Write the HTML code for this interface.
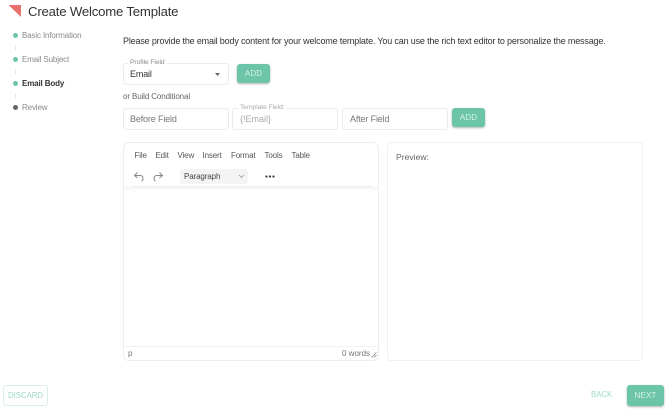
<!DOCTYPE html>
<html><head><meta charset="utf-8">
<style>
html,body{margin:0;padding:0;background:#fff;}
body{width:670px;height:409px;overflow:hidden;position:relative;font-family:"Liberation Sans",sans-serif;color:#333;}
#w{position:absolute;left:0;top:0;width:670px;height:409px;filter:blur(.3px);background:#fff;}
.a{position:absolute;white-space:nowrap;}
.box{position:absolute;box-sizing:border-box;border:1px solid #ebebeb;border-radius:3px;background:#fff;}
.dot{position:absolute;width:5px;height:5px;border-radius:50%;background:#6cc5a8;left:12.5px;}
.vl{position:absolute;left:14.5px;width:1px;height:5px;background:#e6e6e6;}
.step{position:absolute;left:22px;font-size:8px;letter-spacing:-.14px;color:#8a8a8a;white-space:nowrap;line-height:10px;}
.btn{position:absolute;box-sizing:border-box;background:#6cc5a8;color:#d6f0e6;border-radius:3px;text-align:center;font-size:8px;letter-spacing:.15px;box-shadow:0 1px 2px rgba(0,0,0,.3);}
.lg{position:absolute;font-size:6.8px;letter-spacing:-.1px;color:#8a8a8a;background:#fff;padding:0 2px;line-height:8px;white-space:nowrap;}
.val{position:absolute;font-size:9px;letter-spacing:-.15px;color:#777;white-space:nowrap;line-height:11px;}
.m{position:absolute;top:151px;font-size:8px;letter-spacing:-.15px;color:#555;line-height:10px;white-space:nowrap;}
</style></head>
<body><div id="w">
<svg class="a" style="left:8px;top:5px" width="14" height="13"><polygon points="0.5,0 13,0 13,12" fill="#e8706e"/></svg>
<div class="a" style="left:28px;top:2.5px;font-size:13.2px;letter-spacing:-.2px;line-height:17px;color:#333;">Create Welcome Template</div>

<div class="dot" style="top:33px"></div><div class="step" style="top:30.5px">Basic Information</div>
<div class="vl" style="top:45px"></div>
<div class="dot" style="top:57px"></div><div class="step" style="top:54.5px">Email Subject</div>
<div class="vl" style="top:69px"></div>
<div class="dot" style="top:81px"></div><div class="step" style="top:78.5px;color:#333;font-weight:bold">Email Body</div>
<div class="vl" style="top:94px"></div>
<div class="dot" style="top:105px;background:#666"></div><div class="step" style="top:103px">Review</div>

<div class="a" style="left:123px;top:35px;font-size:9px;letter-spacing:-.17px;line-height:12px;color:#333;">Please provide the email body content for your welcome template. You can use the rich text editor to personalize the message.</div>

<div class="box" style="left:123px;top:63px;width:106px;height:22px"></div>
<div class="lg" style="left:128px;top:59px">Profile Field</div>
<div class="val" style="left:130px;top:68.5px;color:#333">Email</div>
<svg class="a" style="left:214px;top:73px" width="7" height="4"><polygon points="1,0 6,0 3.5,3" fill="#666"/></svg>
<div class="btn" style="left:237px;top:64px;width:33px;height:19px;line-height:19px">ADD</div>

<div class="a" style="left:123px;top:91.5px;font-size:8px;letter-spacing:-.12px;line-height:10px;color:#666;">or Build Conditional</div>

<div class="box" style="left:123px;top:108px;width:106px;height:22px"></div>
<div class="val" style="left:130px;top:113.5px">Before Field</div>
<div class="box" style="left:232px;top:108px;width:106px;height:22px"></div>
<div class="lg" style="left:238px;top:104px;color:#aaa">Template Field:</div>
<div class="val" style="left:240px;top:113.5px;color:#aaa;letter-spacing:0">{!Email}</div>
<div class="box" style="left:342px;top:108px;width:106px;height:22px"></div>
<div class="val" style="left:350px;top:113.5px">After Field</div>
<div class="btn" style="left:452px;top:108px;width:33px;height:19px;line-height:19px">ADD</div>

<div class="box" style="left:123px;top:142px;width:256px;height:219px;border-color:#eee;border-radius:6px"></div>
<div class="m" style="left:134.5px">File</div>
<div class="m" style="left:155.5px">Edit</div>
<div class="m" style="left:177.5px">View</div>
<div class="m" style="left:202.5px">Insert</div>
<div class="m" style="left:231px">Format</div>
<div class="m" style="left:264.5px">Tools</div>
<div class="m" style="left:291.5px">Table</div>
<svg class="a" style="left:133px;top:171px" width="12" height="11" fill="none" stroke="#888" stroke-width="1"><path d="M4.5 1.5 L1.5 4.5 L4.5 7 M1.5 4.5 H7 Q10 4.5 10 7.5 Q10 9.5 8.5 10"/></svg>
<svg class="a" style="left:152px;top:171px" width="12" height="11" fill="none" stroke="#888" stroke-width="1"><path d="M7.5 1.5 L10.5 4.5 L7.5 7 M10.5 4.5 H5 Q2 4.5 2 7.5 Q2 9.5 3.5 10"/></svg>
<div class="a" style="left:180px;top:169px;width:68px;height:15px;background:#f4f4f4;border-radius:3px"></div>
<div class="a" style="left:184px;top:171.5px;font-size:8px;letter-spacing:-.12px;line-height:10px;color:#444">Paragraph</div>
<svg class="a" style="left:238px;top:174px" width="7" height="5" fill="none" stroke="#999" stroke-width=".8"><path d="M1 1 L3.5 3.5 L6 1"/></svg>
<svg class="a" style="left:265px;top:175px" width="10" height="3" fill="#333"><circle cx="1.5" cy="1.5" r="1.1"/><circle cx="5" cy="1.5" r="1.1"/><circle cx="8.5" cy="1.5" r="1.1"/></svg>
<div class="a" style="left:124px;top:187px;width:254px;height:5px;background:linear-gradient(#f4f4f4,#fff)"></div>
<div class="a" style="left:130px;top:186px;width:242px;height:1px;background:#eee"></div>
<div class="a" style="left:124px;top:346px;width:254px;height:1px;background:#f2f2f2"></div>
<div class="a" style="left:128px;top:348.5px;font-size:8px;line-height:10px;color:#777">p</div>
<div class="a" style="left:342px;top:348.5px;font-size:8px;line-height:10px;color:#777">0 words</div>
<svg class="a" style="left:371px;top:352px" width="6" height="6" stroke="#888" stroke-width=".8"><path d="M0.5 5.5 L5.5 0.5 M3 5.5 L5.5 3"/></svg>

<div class="box" style="left:387px;top:142px;width:256px;height:219px;border-color:#f0f0f0;border-radius:4px"></div>
<div class="a" style="left:396px;top:152px;font-size:8.6px;line-height:10px;color:#666">Preview:</div>

<div class="a" style="left:3px;top:385px;width:45px;height:21px;box-sizing:border-box;border:1px solid #d9f0e8;border-radius:3px;text-align:center;font-size:7.8px;line-height:19px;color:#9bd9c3">DISCARD</div>
<div class="a" style="left:591px;top:390px;font-size:7.8px;line-height:10px;color:#9bd9c3">BACK</div>
<div class="btn" style="left:627px;top:385px;width:37px;height:21px;line-height:21px">NEXT</div>
</div></body></html>
